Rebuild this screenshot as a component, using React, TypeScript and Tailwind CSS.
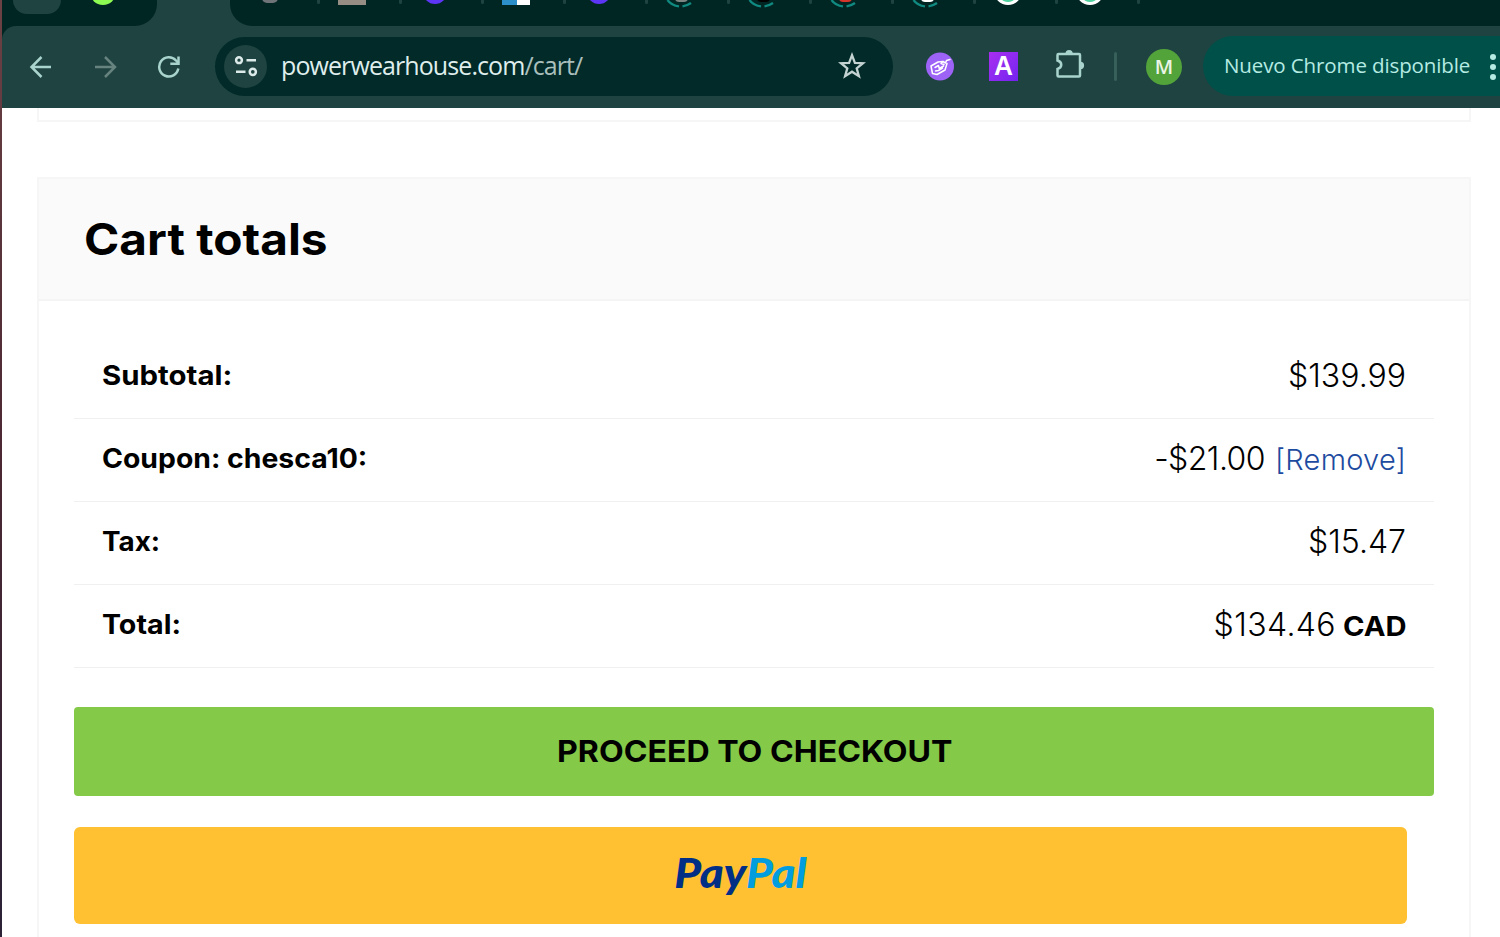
import React from 'react';

type Favicon = 'blob' | 'square' | 'purple' | 'split' | 'ring' | 'badge';

interface Tab {
  id: number;
  icon: Favicon;
  color: string;
}

const TABS: Tab[] = [
  { id: 1, icon: 'blob', color: '#6f7478' },
  { id: 2, icon: 'square', color: '#968d84' },
  { id: 3, icon: 'purple', color: '#5c35f5' },
  { id: 4, icon: 'split', color: '#2c8fc9' },
  { id: 5, icon: 'purple', color: '#5c35f5' },
  { id: 6, icon: 'ring', color: '#7d8583' },
  { id: 7, icon: 'ring', color: '#000000' },
  { id: 8, icon: 'ring', color: '#d5352b' },
  { id: 9, icon: 'ring', color: '#ffffff' },
  { id: 10, icon: 'badge', color: '#4fd1a0' },
  { id: 11, icon: 'badge', color: '#4fd1a0' },
];

const FaviconArt = ({ icon, color }: { icon: Favicon; color: string }) => (
  <svg width="28" height="9" viewBox="0 0 28 9" className="block">
    {icon === 'blob' && <rect x="6" y="-10" width="16" height="13" rx="5" fill={color} />}
    {icon === 'square' && <rect x="0" y="0" width="28" height="5" fill={color} />}
    {icon === 'purple' && <circle cx="15" cy="-8" r="12" fill={color} />}
    {icon === 'split' && (
      <>
        <rect x="0" y="0" width="15" height="5" fill={color} />
        <rect x="15" y="0" width="13" height="5" fill="#ffffff" />
      </>
    )}
    {icon === 'ring' && (
      <>
        <path d="M1.5 0Q5.5 5.500 13 6.400M16.500 6.400Q21.500 5.500 25 3" fill="none" stroke="#108a80" strokeWidth="2.300" />
        <rect x="9" y="-10" width="13" height="12" rx="4" fill={color} />
      </>
    )}
    {icon === 'badge' && (
      <>
        <circle cx="14" cy="-9" r="14" fill="#ffffff" />
        <ellipse cx="14" cy="-1" rx="6" ry="3" fill={color} />
      </>
    )}
  </svg>
);

const TabStrip = () => (
  <div className="flex h-[26px] overflow-hidden bg-[#1f4340]">
    <div className="flex w-[155px] items-start rounded-br-[22px] bg-[#002623] pl-[11px]">
      <div className="h-[14px] w-12 rounded-b-[16px] bg-[#1f4340]" />
      <svg width="28" height="9" viewBox="0 0 28 9" className="ml-[28px] block">
        <circle cx="14" cy="-8" r="13" fill="#8dfb52" />
      </svg>
    </div>
    <div className="w-[73px]" />
    <div className="flex flex-1 items-start rounded-bl-[22px] bg-[#002623] pl-[8px]">
      {TABS.map((tab) => (
        <div key={tab.id} className="flex w-[82px] shrink-0 items-start justify-between pl-[18px]">
          <FaviconArt icon={tab.icon} color={tab.color} />
          <span className="h-1 w-[3px] rounded-b bg-[#1f4340]" />
        </div>
      ))}
    </div>
  </div>
);

const Toolbar = () => (
  <div className="flex h-[82px] items-center rounded-tl-[14px] bg-[#1f4340] pb-[2px]">
    <svg width="24" height="24" viewBox="0 0 24 24" className="mt-px ml-[27px]" fill="none" stroke="#a9d3cd" strokeWidth="2.500">
      <path d="M22 12H3M12.500 2L2.500 12l10 10" />
    </svg>
    <svg width="24" height="24" viewBox="0 0 24 24" className="mt-px ml-[41px]" fill="none" stroke="#67837f" strokeWidth="2.500">
      <path d="M1 12h19.500M11 2l10 10-10 10" />
    </svg>
    <svg width="24" height="24" viewBox="0 0 24 24" className="mt-px ml-[39px]" fill="none" stroke="#a9d3cd" strokeWidth="2.500">
      <path d="M21.300 13.500A9.600 9.600 0 1 1 19 5.500L21.500 8.200" />
      <path d="M21.500 1.500v7.300h-8.200" />
    </svg>

    <div className="ml-[34px] flex h-[59px] w-[678px] items-center rounded-full bg-[#012a28] pl-[9px]">
      <div className="flex size-[43px] items-center justify-center rounded-full bg-[#1f4340]">
        <svg width="24" height="24" viewBox="0 0 24 24" fill="none" stroke="#dcebe9" strokeWidth="2.500">
          <circle cx="5" cy="6.200" r="2.900" />
          <path d="M12.500 6.200H22M2 17.800h9.500" />
          <circle cx="18.800" cy="17.800" r="3.100" />
        </svg>
      </div>
      <span className="-mt-px ml-[14px] w-[301px] whitespace-nowrap font-['Open_Sans'] text-[25px] leading-none tracking-[-0.910px] text-[#dfeeec]">
        powerwearhouse.com<span className="text-[#a9bfbc]">/cart/</span>
      </span>
      <svg width="28" height="28" viewBox="0 0 28 28" className="-mt-px ml-[256px]" fill="none" stroke="#c4d3d1" strokeWidth="2.300">
        <path d="M14 3.200l2.900 7.600 8.100.4-6.300 5.100 2.200 7.900-6.900-4.500-6.900 4.500 2.200-7.900L3 11.200l8.100-.4z" />
      </svg>
    </div>

    <svg width="29" height="29" viewBox="0 0 29 29" className="ml-[33px]">
      <circle cx="14" cy="14.500" r="14" fill="#9c63f6" />
      <g fill="none" stroke="#ffffff" strokeWidth="1.500" strokeLinejoin="round" strokeLinecap="round">
        <path d="M5 14l7-4 5-.5 2.500 1.500 1-2.500 3.500-1M5 14l1.500 7.500 4.500 1 8-4.500 2-6.500" />
        <path d="M9 15.500l3.500-2 .8 3 4.200-2.500M9.500 19l3-.5 4-2.500M17 9.500l-2 2 3 1" />
      </g>
    </svg>
    <div className="ml-[34px] flex size-[29px] items-center justify-center bg-linear-to-br from-[#a92df0] to-[#7422f0] font-['Inter'] text-[26px] font-semibold leading-none text-white">
      A
    </div>
    <svg width="32" height="32" viewBox="0 0 32 32" className="ml-[36px] -mt-[4px]">
      <path
        d="M4.500 6H25q1 0 1 1v20.500q0 1-1 1H4.500q-1 0-1-1v-6.500c5-1.500 5-7 0-8.500V7q0-1 1-1z"
        fill="none"
        stroke="#a9d3cd"
        strokeWidth="2.500"
      />
      <path d="M11.500 5.500a3.600 3.600 0 0 1 7.200 0zM26.500 13.800a3.600 3.600 0 0 1 0 7.200z" fill="#a9d3cd" />
    </svg>
    <div className="ml-[28px] h-[29px] w-[3px] rounded-full bg-[#37605b]" />
    <div className="mt-px ml-[29px] flex size-[36px] items-center justify-center rounded-full bg-[#53a33b] font-['Open_Sans'] text-[20px] font-semibold leading-none text-[#eaf5e6]">
      M
    </div>
    <div className="ml-[21px] flex h-[60px] flex-1 items-center rounded-l-full bg-[#00504a] pl-[21px]">
      <span className="-mt-[2px] w-[246px] whitespace-nowrap font-['Open_Sans'] text-[20.500px] leading-none tracking-[-0.110px] text-[#b5ebe2]">
        Nuevo Chrome disponible
      </span>
      <div className="mt-px ml-[20px] flex flex-col gap-[4px]">
        <span className="size-[6px] rounded-full bg-[#b5ebe2]" />
        <span className="size-[6px] rounded-full bg-[#b5ebe2]" />
        <span className="size-[6px] rounded-full bg-[#b5ebe2]" />
      </div>
    </div>
  </div>
);

interface RowProps {
  label: string;
  labelClass: string;
  children: React.ReactNode;
}

const Row = ({ label, labelClass, children }: RowProps) => (
  <div className="flex h-[83px] items-center justify-between border-b border-[#f0f0f0] px-7 pb-[3px]">
    <span className={`origin-left text-[27px] font-bold leading-none ${labelClass}`}>{label}</span>
    <span className="flex items-baseline text-[32px] font-light leading-none">{children}</span>
  </div>
);

export default function App() {
  return (
    <div className="flex h-[937px] w-[1500px] overflow-hidden bg-white font-['Inter',sans-serif] text-black">
      <div className="w-[2px] shrink-0 bg-linear-to-b from-[#6b4245] via-[#4a2733] to-[#2b2236]" />
      <div className="flex min-w-0 flex-1 flex-col">
        <header className="shrink-0 bg-[#002623]">
          <TabStrip />
          <Toolbar />
        </header>

        <main className="pl-[35px] pr-[29px]">
          <div className="h-[14px] border-x-2 border-b-2 border-[#f6f6f6]" />

          <section className="mt-[55px] h-[800px] border-2 border-[#f6f6f6]">
            <div className="flex h-[122px] items-center border-b-2 border-[#f4f4f4] bg-[#fafafa] pl-[45px]">
              <h2 className="origin-left scale-x-[1.085] text-[44px] font-bold leading-none">Cart totals</h2>
            </div>

            <div className="pl-[35px] pr-[35px] pt-[35px]">
              <Row label="Subtotal:" labelClass="scale-x-[1.088]">$139.99</Row>
              <Row label="Coupon: chesca10:" labelClass="scale-x-[1.050]">
                <span className="tracking-[-0.550px]">-$21.00</span>
                <a className="ml-[10px] text-[29px] tracking-[0.250px] text-[#1d4ba0]">[Remove]</a>
              </Row>
              <Row label="Tax:" labelClass="scale-x-[1.030]">$15.47</Row>
              <Row label="Total:" labelClass="scale-x-[1.060]">
                <span className="tracking-[0.400px]">$134.46</span>
                <strong className="ml-[7px] w-[63px] origin-left scale-x-[1.080] text-[27px] font-bold">CAD</strong>
              </Row>

              <button className="mt-[39px] flex h-[89px] w-full items-center justify-center rounded bg-[#84ca48] pb-px pl-px text-[30px] font-bold leading-none">
                <span className="scale-x-[1.070]">PROCEED TO CHECKOUT</span>
              </button>
              <button className="mt-[31px] flex h-[97px] w-[1333px] items-center justify-center rounded-md bg-[#ffc132] pb-[6px] font-['Lato'] text-[41px] font-black italic leading-none">
                <span className="scale-x-[1.115]">
                  <span className="text-[#012f86]">Pay</span>
                  <span className="text-[#019ddf]">Pal</span>
                </span>
              </button>
            </div>
          </section>
        </main>
      </div>
    </div>
  );
}
